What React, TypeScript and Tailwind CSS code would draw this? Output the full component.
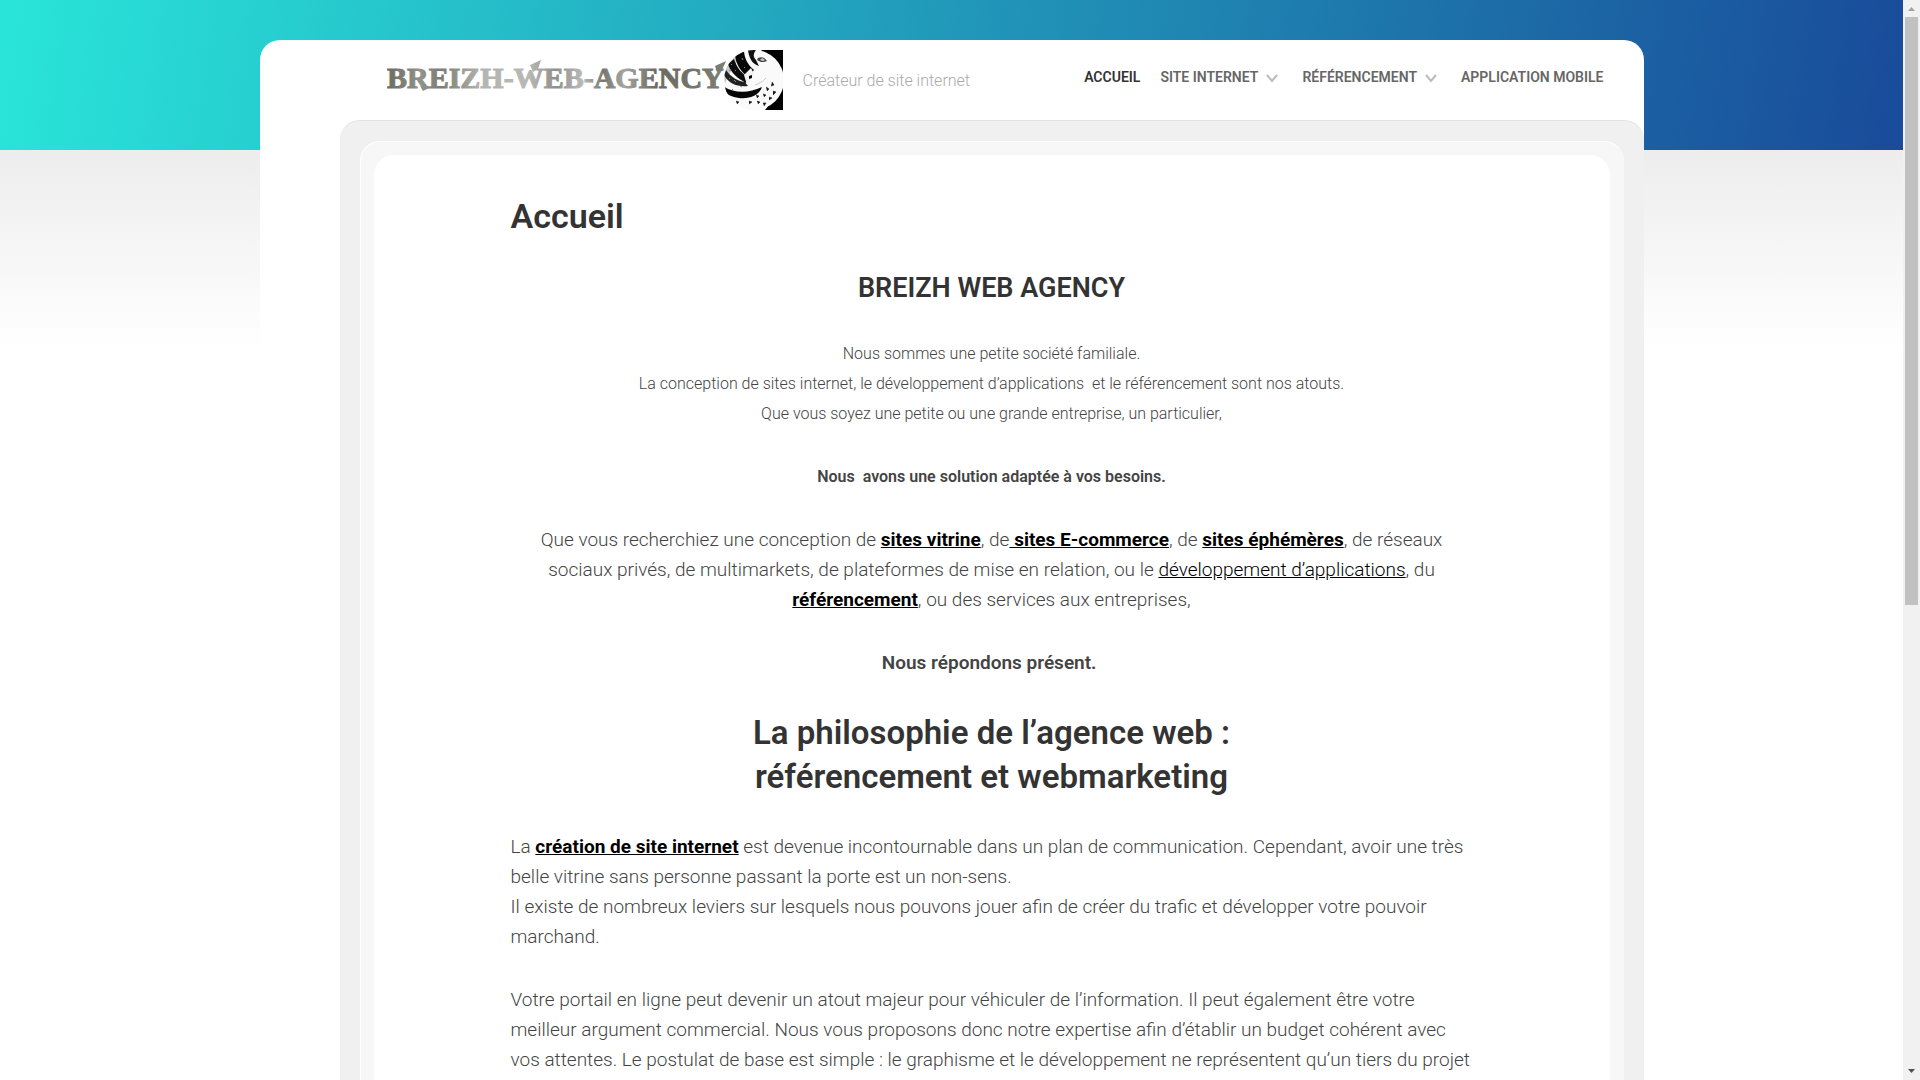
import type { ReactNode } from "react";

function Emblem() {
  return (
    <g transform="translate(336 0)">
      <defs>
        <clipPath id="disc">
          <circle cx="31" cy="30" r="30" />
        </clipPath>
      </defs>
      <path d="M38 0H60V60H42L58 40V20Z" fill="#000" />
      <circle cx="31" cy="30" r="30" fill="#fafafa" />
      <g clipPath="url(#disc)">
        <path d="M0 18C4 8 12 2 20 0L14 12C8 20 5 26 2 34Z" fill="#c8c8c8" />
        <path d="M12 5C13 14 17 21 25 27L31 20C25 15 21 8 21 0Z" fill="#080808" />
        <path d="M25 0C26 8 29 14 36 16L33 10C30 7 30 4 33 0Z" fill="#111" />
        <path d="M5 14C8 23 14 28 23 33L26 28C19 24 14 18 11 9Z" fill="#0c0c0c" />
        <path d="M1 25C6 34 14 37 25 36L22 32C14 31 8 27 3 20Z" fill="#222" />
        <path d="M0 36C10 43 25 44 39 37C36 46 26 49 16 48C8 47 3 44 0 39Z" fill="#050505" />
        <path d="M35 8C39 6 42 8 44 11C40 13 37 12 34 10Z" fill="#444" />
        <path d="M37 10L39 8L42 10L40 11Z" fill="#ccc" />
        <path d="M21 25L28 18L31 24L24 35Z" fill="#f2f2f2" />
        <path d="M26 26L29 25L29 28L26 29Z" fill="#000" />
        <path d="M32 35C36 34 40 31 43 28" stroke="#c8c8c8" strokeWidth="1" fill="none" />
        <path
          d="M49 32l2 3-3 1M43 37l3 2-2 2M50 41l3 1-3 3M40 44l3 1-2 2M46 47l3 1-3 2M33 45l3 1-2 2M34 51l3 1-2 2M26 51l3 1-3 2M40 53l3 0-2 3M13 51l3 1-2 2"
          fill="#111"
          stroke="#222"
          strokeWidth="0.6"
        />
        <path
          d="M8 14l1 1M6 20l2 1M17 36l2 1M11 30l2 2M9 39l1 1M19 8l1 2M6 28l1 1M21 17l1 1M12 20l1 1"
          stroke="#888"
          strokeWidth="1"
        />
      </g>
    </g>
  );
}

function Logo() {
  return (
    <a href="#" className="shrink-0" aria-label="Breizh-Web-Agency">
      <svg width="396" height="60" viewBox="0 0 396 60">
        <defs>
          <linearGradient id="metal" gradientUnits="userSpaceOnUse" x1="0" y1="0" x2="338" y2="0">
            <stop offset="0" stopColor="#6c6c62" />
            <stop offset="0.1" stopColor="#929289" />
            <stop offset="0.16" stopColor="#7c7c72" />
            <stop offset="0.28" stopColor="#b4b4b0" />
            <stop offset="0.42" stopColor="#b8b8b4" />
            <stop offset="0.5" stopColor="#90908a" />
            <stop offset="0.58" stopColor="#bababa" />
            <stop offset="0.64" stopColor="#77776f" />
            <stop offset="0.7" stopColor="#a5a5a0" />
            <stop offset="0.8" stopColor="#6a6a60" />
            <stop offset="1" stopColor="#7d7d74" />
          </linearGradient>
        </defs>
        <g fill="url(#metal)">
          <path d="M143 15L154 10L151 19L146 22Z" />
          <path d="M328 16L339 11L335 20L330 22Z" />
          <path d="M33 36L42 38L36 41Z" />
        </g>
        <text
          x="0"
          y="38"
          fill="url(#metal)"
          stroke="url(#metal)"
          strokeWidth="1"
          className="font-['Liberation_Serif',serif] text-[30px] font-bold"
        >
          BREIZH-WEB-AGENCY
        </text>
        <Emblem />
      </svg>
    </a>
  );
}

function Chevron() {
  return (
    <svg width="12" height="9" viewBox="0 0 12 9" className="mt-0.5" fill="none" stroke="#bbb" strokeWidth="2">
      <path d="M1 1L6 7L11 1" />
    </svg>
  );
}

function NavLink({ children, active, menu }: { children: ReactNode; active?: boolean; menu?: boolean }) {
  return (
    <li className={menu ? "pr-1" : ""}>
      <a
        href="#"
        className={
          active
            ? "flex items-center gap-2 text-sm font-semibold text-[#333]"
            : "flex items-center gap-2 text-sm font-semibold text-[#666]"
        }
      >
        {children}
        {menu && <Chevron />}
      </a>
    </li>
  );
}

function TextLink({ children, bold = true }: { children: ReactNode; bold?: boolean }) {
  return (
    <a href="#" className={bold ? "font-bold text-black underline" : "text-black underline"}>
      {children}
    </a>
  );
}

function Header() {
  return (
    <header className="flex h-20 items-center justify-between pr-10 pl-[127px]">
      <div className="flex items-center gap-5">
        <Logo />
        <p className="pt-0.5 text-base font-light text-[#aaa]">Créateur de site internet</p>
      </div>
      <nav className="pb-1.5">
        <ul className="flex items-center gap-5">
          <NavLink active>ACCUEIL</NavLink>
          <NavLink menu>SITE INTERNET</NavLink>
          <NavLink menu>RÉFÉRENCEMENT</NavLink>
          <NavLink>APPLICATION MOBILE</NavLink>
        </ul>
      </nav>
    </header>
  );
}

function Article() {
  return (
    <article className="mx-auto flex max-w-[962px] flex-col gap-[33px] pt-10 text-[19px] leading-[30px] font-light text-[#444]">
      <h1 className="text-[34px] leading-[42px] font-semibold text-[#333]">Accueil</h1>
      <h2 className="text-center text-[27px] leading-9 font-semibold text-[#333]">BREIZH WEB AGENCY</h2>
      <p className="text-center text-base leading-[30px]">
        Nous sommes une petite société familiale.
        <br />
        La conception de sites internet, le développement d’applications&nbsp; et le référencement sont nos atouts.
        <br />
        Que vous soyez une petite ou une grande entreprise, un particulier,
      </p>
      <p className="text-center text-base leading-[30px] font-semibold">
        Nous&nbsp; avons une solution adaptée à vos besoins.
      </p>
      <p className="px-6 text-center">
        Que vous recherchiez une conception de <TextLink>sites vitrine</TextLink>, de
        <TextLink> sites E-commerce</TextLink>, de <TextLink>sites éphémères</TextLink>, de réseaux sociaux privés, de
        multimarkets, de plateformes de mise en relation, ou le{" "}
        <TextLink bold={false}>développement d’applications</TextLink>, du <TextLink>référencement</TextLink>, ou des
        services aux entreprises,
      </p>
      <p className="text-center font-semibold">Nous répondons présent.&nbsp;</p>
      <h2 className="text-center text-[33px] leading-[44px] font-semibold text-[#333]">
        La philosophie de l’agence web :
        <br />
        référencement et webmarketing
      </h2>
      <p>
        La <TextLink>création de site internet</TextLink> est devenue incontournable dans un plan de communication.
        Cependant, avoir une très belle vitrine sans personne passant la porte est un non-sens.
        <br />
        Il existe de nombreux leviers sur lesquels nous pouvons jouer afin de créer du trafic et développer votre
        pouvoir marchand.
      </p>
      <p>
        Votre portail en ligne peut devenir un atout majeur pour véhiculer de l’information. Il peut également être
        votre meilleur argument commercial. Nous vous proposons donc notre expertise afin d’établir un budget cohérent
        avec vos attentes. Le postulat de base est simple : le graphisme et le développement ne représentent qu’un tiers
        du projet
      </p>
    </article>
  );
}

function Scrollbar() {
  return (
    <div className="flex w-[17px] shrink-0 flex-col items-center bg-[#f1f1f1]" aria-hidden="true">
      <svg width="17" height="17" viewBox="0 0 17 17">
        <path d="M8.500 7L12 11H5Z" fill="#a3a3a3" />
      </svg>
      <div className="h-[588px] w-[13px] bg-[#c1c1c1]" />
      <svg width="17" height="17" viewBox="0 0 17 17" className="mt-auto">
        <path d="M5 6H12L8.500 10Z" fill="#505050" />
      </svg>
    </div>
  );
}

export default function App() {
  return (
    <div className="flex h-screen overflow-hidden bg-white font-[Roboto,sans-serif]">
      <div className="grid min-w-0 flex-1 overflow-hidden">
        <div className="col-start-1 row-start-1" aria-hidden="true">
          <div className="h-[150px] bg-[linear-gradient(98deg,#29e5d9,#194b9a)]" />
          <div className="h-[200px] bg-linear-to-b from-[#ededed] to-white" />
        </div>
        <div className="col-start-1 row-start-1 mx-auto mt-10 w-full max-w-[1384px] rounded-t-[20px] bg-white">
          <Header />
          <div className="ml-20 rounded-t-[20px] border-t border-[#e2e2e2] bg-[#f0f0f0] px-5 pt-5">
            <div className="rounded-t-[20px] border-t border-l border-white bg-[#f7f7f7] pt-[13px] pr-[14px] pl-[13px]">
              <main className="rounded-t-[20px] bg-white px-8 pb-16">
                <Article />
              </main>
            </div>
          </div>
        </div>
      </div>
      <Scrollbar />
    </div>
  );
}
